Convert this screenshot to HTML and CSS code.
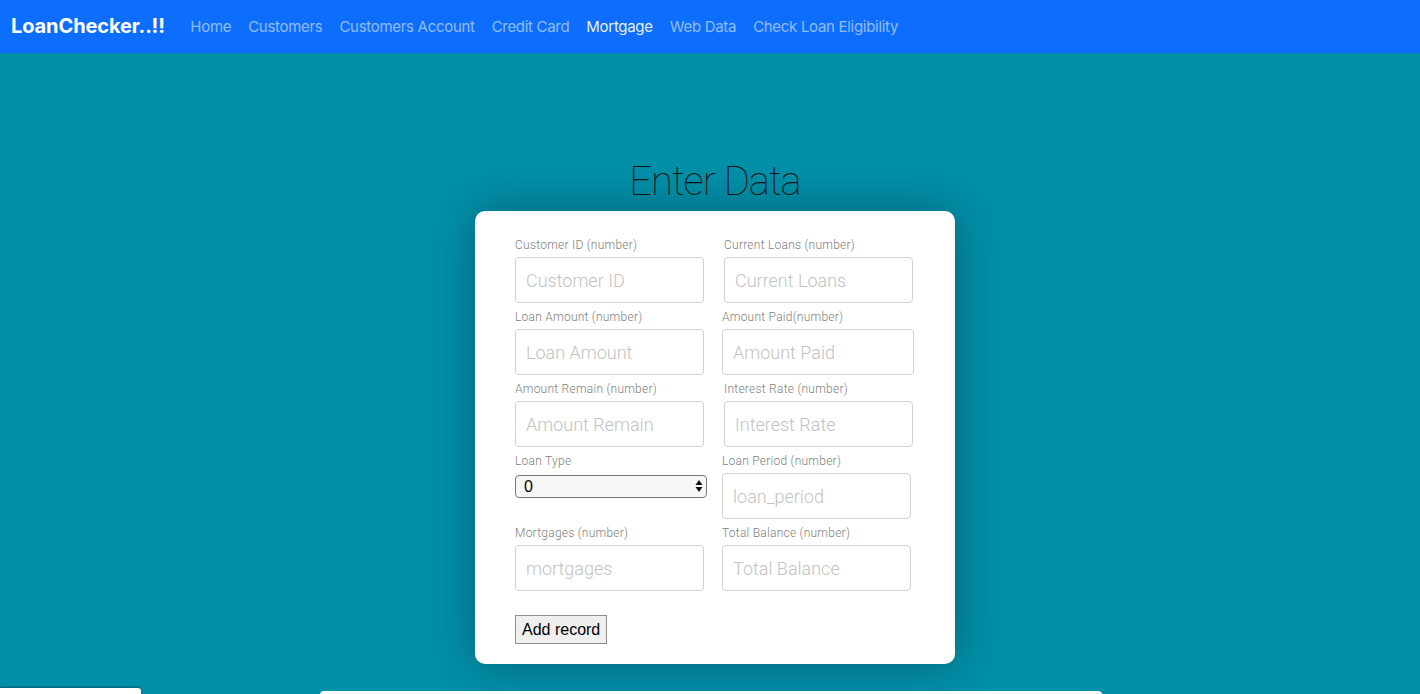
FILE: index.html
```html
<!DOCTYPE html>
<html lang="en">
<head>
<meta charset="utf-8">
<title>LoanChecker</title>
<link rel="stylesheet" href="styles.css">
</head>
<body>
<nav class="navbar">
  <a class="brand" href="#">LoanChecker..!!</a>
  <ul class="nav-links">
    <li><a class="nav-link" href="#">Home</a></li>
    <li><a class="nav-link" href="#">Customers</a></li>
    <li><a class="nav-link" href="#">Customers Account</a></li>
    <li><a class="nav-link" href="#">Credit Card</a></li>
    <li><a class="nav-link active" href="#">Mortgage</a></li>
    <li><a class="nav-link" href="#">Web Data</a></li>
    <li><a class="nav-link" href="#">Check Loan Eligibility</a></li>
  </ul>
</nav>

<main class="main">
  <h1 class="title">Enter Data</h1>
  <form class="card">
    <div class="row">
      <div class="field field-l">
        <label class="label">Customer ID (number)</label>
        <input class="input" type="text" placeholder="Customer ID">
      </div>
      <div class="field field-r">
        <label class="label">Current Loans (number)</label>
        <input class="input" type="text" placeholder="Current Loans">
      </div>
    </div>
    <div class="row row-tight">
      <div class="field field-l">
        <label class="label">Loan Amount (number)</label>
        <input class="input" type="text" placeholder="Loan Amount">
      </div>
      <div class="field field-wide">
        <label class="label">Amount Paid(number)</label>
        <input class="input" type="text" placeholder="Amount Paid">
      </div>
    </div>
    <div class="row">
      <div class="field field-l">
        <label class="label">Amount Remain (number)</label>
        <input class="input" type="text" placeholder="Amount Remain">
      </div>
      <div class="field field-r">
        <label class="label">Interest Rate (number)</label>
        <input class="input" type="text" placeholder="Interest Rate">
      </div>
    </div>
    <div class="row row-select">
      <div class="field field-sel">
        <label class="label">Loan Type</label>
        <div class="select-wrap">
          <select class="select"><option>0</option></select>
          <svg class="select-arrows" width="8" height="14" viewBox="0 0 8 14"><path d="M4 1 L7.5 6 H0.5 Z M4 13 L7.5 8 H0.5 Z" fill="#111"/></svg>
        </div>
      </div>
      <div class="field field-r">
        <label class="label">Loan Period (number)</label>
        <input class="input" type="text" placeholder="loan_period">
      </div>
    </div>
    <div class="row row-tight">
      <div class="field field-l">
        <label class="label">Mortgages (number)</label>
        <input class="input" type="text" placeholder="mortgages">
      </div>
      <div class="field field-r">
        <label class="label">Total Balance (number)</label>
        <input class="input" type="text" placeholder="Total Balance">
      </div>
    </div>
    <button class="btn" type="button">Add record</button>
  </form>
</main>

<section class="below">
  <div class="side-box"><span class="side-text">Loan records list</span></div>
  <div class="table-box"></div>
</section>
</body>
</html>
```

FILE: styles.css
```css
* { box-sizing: border-box; }

html, body {
  margin: 0;
  padding: 0;
}

body {
  background: #0190a8;
  font-family: Roboto, "Liberation Sans", sans-serif;
}

.navbar {
  height: 53px;
  background: #0d6efd;
  display: flex;
  align-items: center;
  padding: 0 11px 1px;
}

.brand {
  font-family: Inter, "Liberation Sans", sans-serif;
  font-weight: 700;
  font-size: 20px;
  color: #fff;
  text-decoration: none;
  margin-right: 17px;
  letter-spacing: -0.1px;
}

.nav-links {
  list-style: none;
  margin: 0;
  padding: 0;
  display: flex;
}

.nav-link {
  display: block;
  padding: 0 8.5px;
  font-family: Inter, "Liberation Sans", sans-serif;
  font-size: 15px;
  letter-spacing: -0.3px;
  color: rgba(255, 255, 255, 0.55);
  text-decoration: none;
}

.nav-link.active {
  color: rgba(255, 255, 255, 0.92);
}

.main {
  padding-top: 104px;
  padding-left: 10px;
  display: flex;
  flex-direction: column;
  align-items: center;
}

.title {
  margin: 0 0 5px;
  font-family: Roboto, sans-serif;
  font-weight: 100;
  font-size: 40px;
  letter-spacing: -1px;
  line-height: 49px;
  color: #111;
}

.card {
  width: 480px;
  background: #fff;
  border-radius: 10px;
  padding: 26px 40px 20px;
  box-shadow: 0 0 45px rgba(20, 40, 60, 0.45);
}

.row {
  display: flex;
  gap: 20px;
  margin-bottom: 6px;
}

.row-tight {
  gap: 18px;
}

.row-select {
  gap: 15px;
}

.field {
  display: flex;
  flex-direction: column;
}

.field-l { width: 189px; }
.field-r { width: 189px; }
.field-wide { width: 192px; }
.field-sel { width: 192px; }

.label {
  font-size: 12px;
  line-height: 16px;
  font-weight: 300;
  letter-spacing: 0.25px;
  color: #808080;
  margin-bottom: 4px;
  white-space: nowrap;
}

.input {
  height: 46px;
  width: 100%;
  border: 1px solid #d2d2d2;
  border-radius: 4px;
  padding: 0 10px;
  font-family: Roboto, sans-serif;
  font-weight: 300;
  font-size: 18px;
  color: #333;
  background: #fff;
}

.input::placeholder {
  color: #c2c2c2;
  font-weight: 300;
}

.select-wrap {
  position: relative;
  margin-top: 2px;
  height: 23px;
}

.select {
  appearance: none;
  -webkit-appearance: none;
  width: 100%;
  height: 23px;
  border: 1px solid #767676;
  border-radius: 4px;
  background: #f7f7f7;
  padding: 0 8px;
  font-family: "Liberation Sans", Arial, sans-serif;
  font-size: 16px;
  color: #000;
}

.select-arrows {
  position: absolute;
  right: 4px;
  top: 4px;
  pointer-events: none;
}

.btn {
  margin-top: 18px;
  height: 29px;
  padding: 0 6px;
  background: #efefef;
  border: 1px solid #8f8f8f;
  border-radius: 0;
  font-family: "Liberation Sans", Arial, sans-serif;
  font-size: 16px;
  color: #000;
}

.below {
  margin-top: 24px;
  display: flex;
  align-items: flex-start;
}

.side-box {
  width: 141px;
  height: 120px;
  background: #fff;
  border-top-right-radius: 3px;
  box-shadow: 0 -1px 2px rgba(0, 40, 60, 0.5);
  padding: 4px 6px;
}

.side-text {
  font-size: 13px;
  color: #999;
}

.table-box {
  margin-top: 3px;
  margin-left: 179px;
  width: 782px;
  height: 120px;
  background: #fff;
  border-radius: 4px;
}
```
